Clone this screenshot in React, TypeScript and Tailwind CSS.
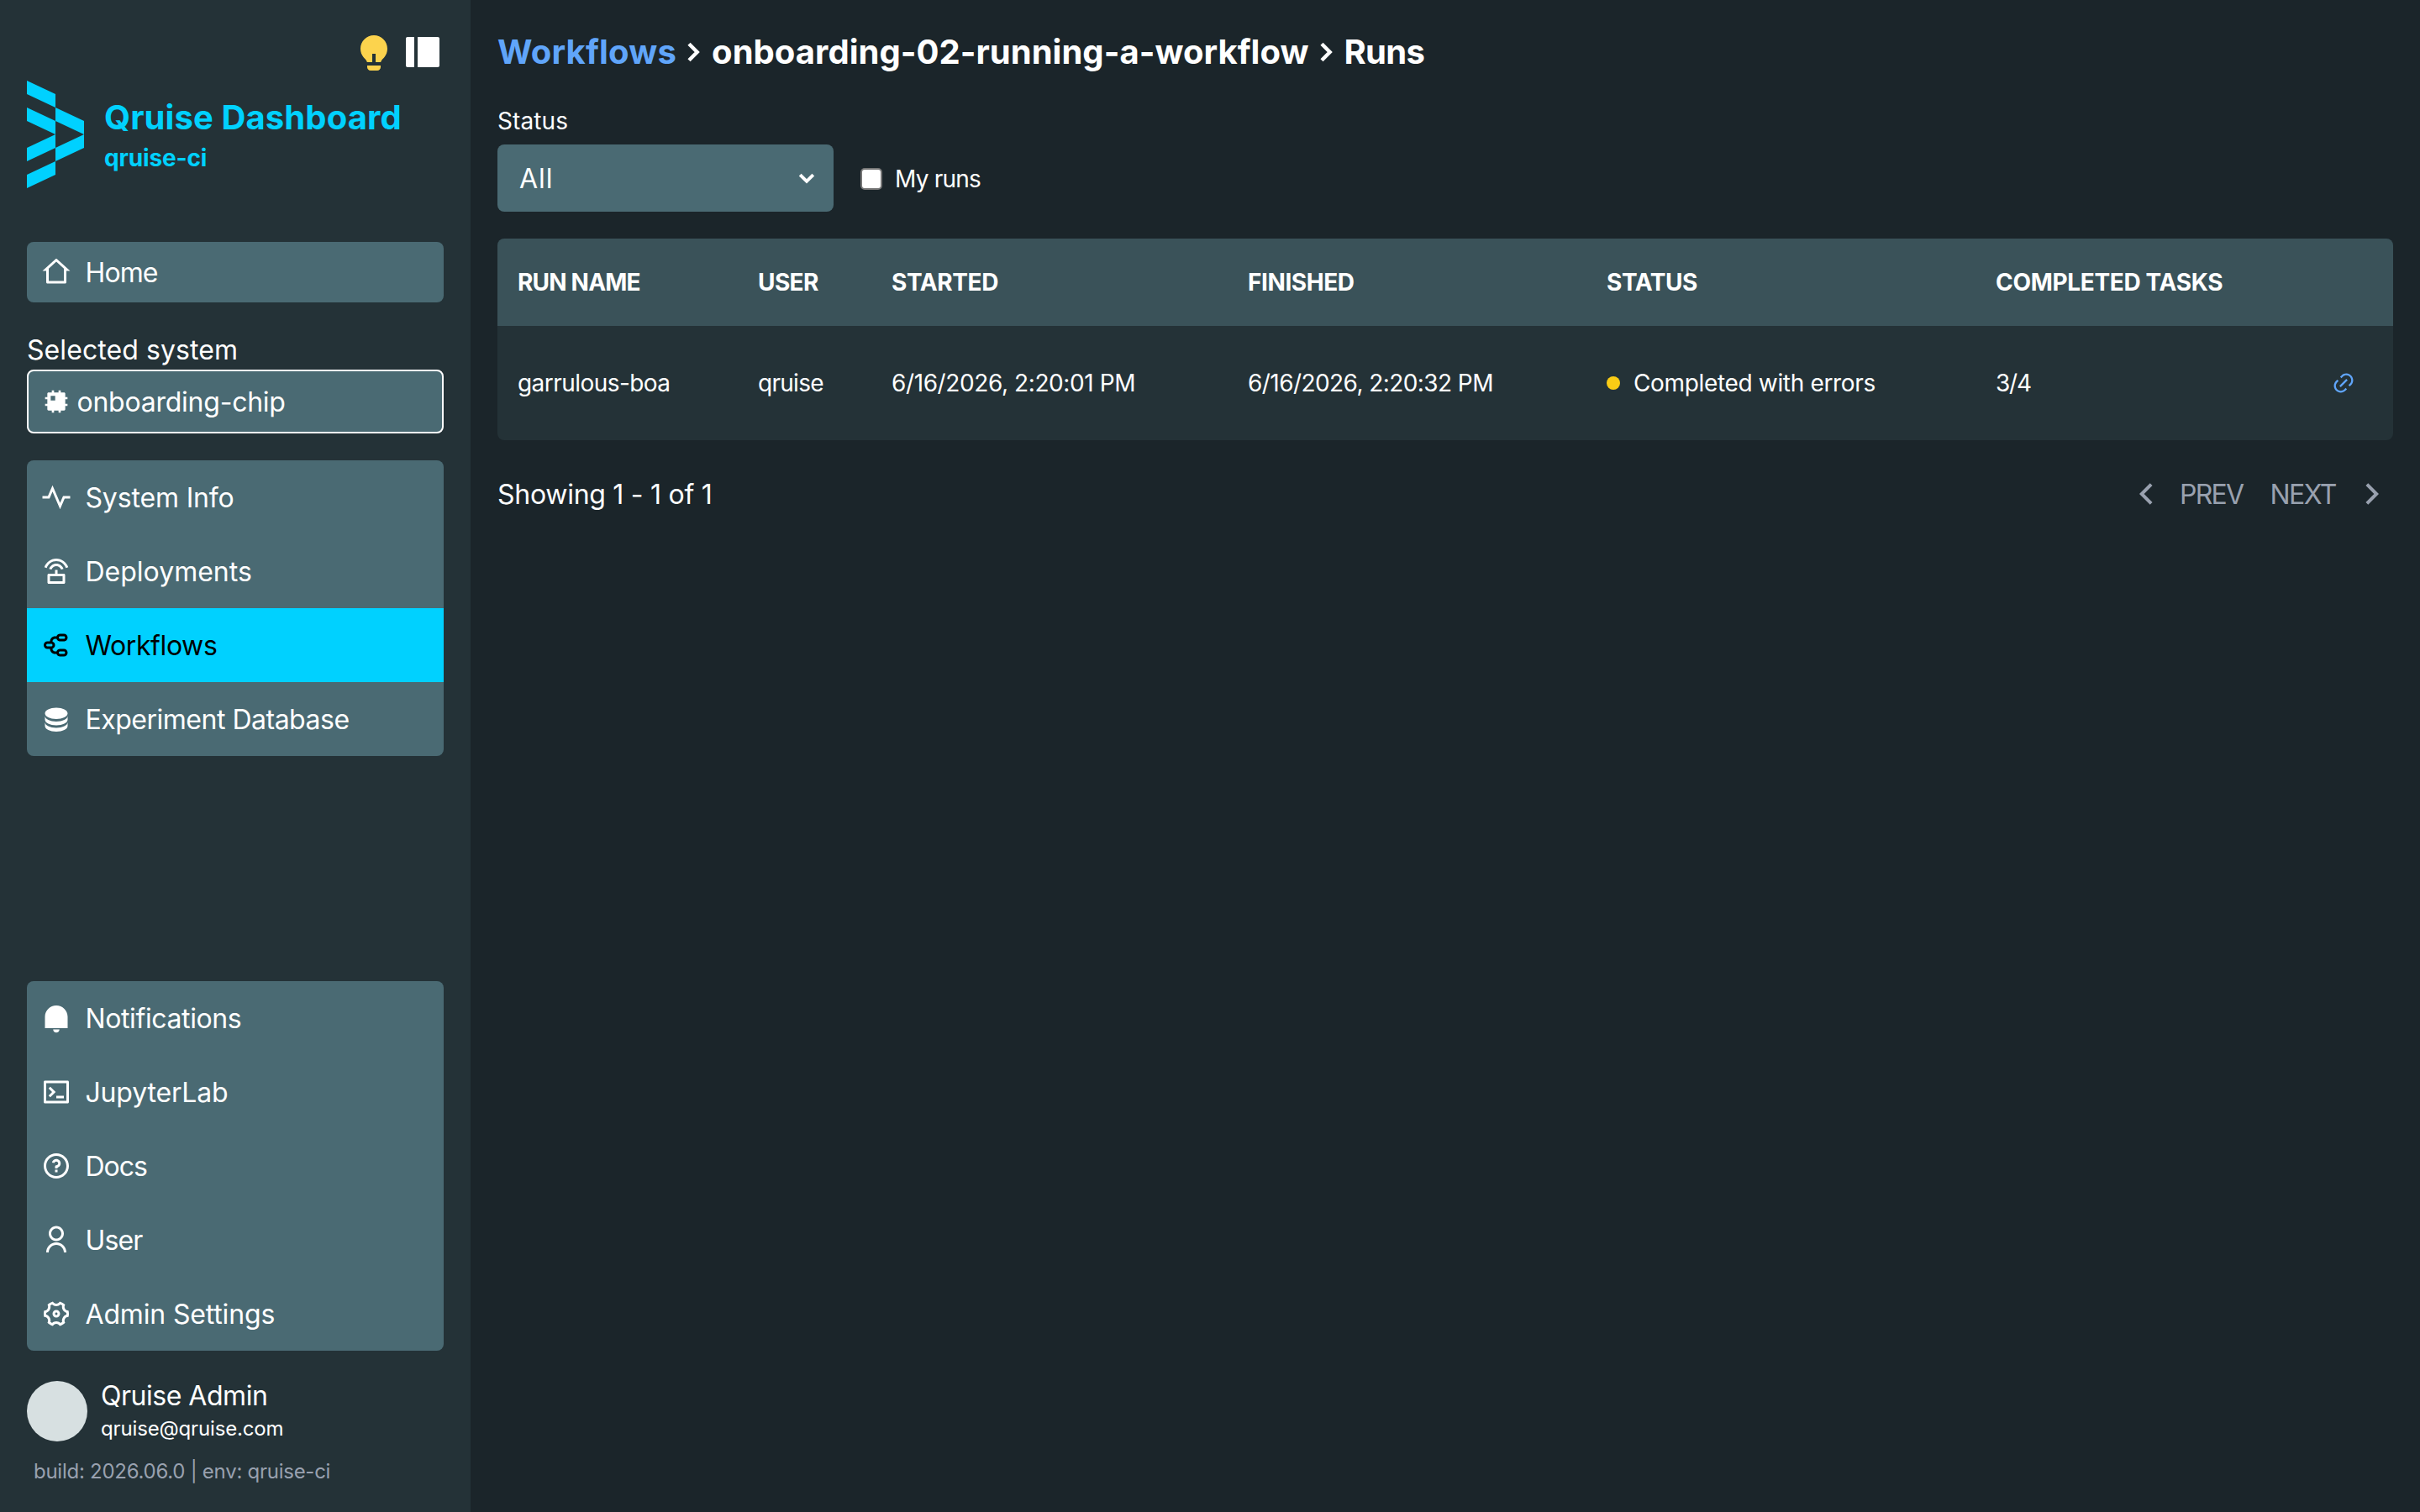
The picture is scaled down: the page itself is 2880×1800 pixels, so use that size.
import { FC } from "react";
import { IconType } from "react-icons";
import {
  RiArrowLeftSLine,
  RiArrowRightSLine,
  RiCpuFill,
  RiDatabase2Fill,
  RiHome2Line,
  RiLayoutLeftFill,
  RiLightbulbFill,
  RiLink,
  RiMindMap,
  RiNotificationFill,
  RiPulseLine,
  RiQuestionLine,
  RiRouterLine,
  RiSettings4Line,
  RiTerminalBoxLine,
  RiUserLine,
} from "react-icons/ri";

interface NavItem {
  label: string;
  icon: IconType;
  tracking: string;
  active?: boolean;
}

const systemItems: NavItem[] = [
  { label: "System Info", icon: RiPulseLine, tracking: "tracking-[-0.16px]" },
  { label: "Deployments", icon: RiRouterLine, tracking: "tracking-normal" },
  {
    label: "Workflows",
    icon: RiMindMap,
    tracking: "tracking-[-0.4px]",
    active: true,
  },
  {
    label: "Experiment Database",
    icon: RiDatabase2Fill,
    tracking: "tracking-[-0.49px]",
  },
];

const generalItems: NavItem[] = [
  {
    label: "Notifications",
    icon: RiNotificationFill,
    tracking: "tracking-[-0.39px]",
  },
  {
    label: "JupyterLab",
    icon: RiTerminalBoxLine,
    tracking: "tracking-[-0.16px]",
  },
  { label: "Docs", icon: RiQuestionLine, tracking: "tracking-[-1px]" },
  { label: "User", icon: RiUserLine, tracking: "tracking-[-0.9px]" },
  {
    label: "Admin Settings",
    icon: RiSettings4Line,
    tracking: "tracking-[-0.16px]",
  },
];

const columns = [
  { label: "Run name", className: "w-[286px] tracking-[-0.81px]" },
  { label: "User", className: "w-[159px] tracking-[-0.61px]" },
  { label: "Started", className: "w-[424px] tracking-[-0.38px]" },
  { label: "Finished", className: "w-[427px] tracking-[-0.42px]" },
  { label: "Status", className: "w-[463px] tracking-[-0.42px]" },
  { label: "Completed tasks", className: "w-[397px] tracking-[-0.33px]" },
];

const runs = [
  {
    name: "garrulous-boa",
    user: "qruise",
    started: "6/16/2026, 2:20:01 PM",
    finished: "6/16/2026, 2:20:32 PM",
    status: "Completed with errors",
    tasks: "3/4",
  },
];

const Logo = () => (
  <svg width="68" height="128" viewBox="0 0 68 128" fill="#00d1ff">
    <path d="M0 0L34 16V32L0 16Z" />
    <path d="M0 32L34 48V64L0 48Z" />
    <path d="M34 32L68 48V64L34 48Z" />
    <path d="M0 80L34 64V80L0 96Z" />
    <path d="M34 80L68 64V80L34 96Z" />
    <path d="M0 112L34 96V112L0 128Z" />
  </svg>
);

const Separator = () => (
  <svg width="16" height="24" viewBox="0 0 16 24" fill="none">
    <path d="M2 2.2L11.7 12L2 21.8" stroke="currentColor" strokeWidth="4.4" />
  </svg>
);

const NavLink: FC<{ item: NavItem }> = ({ item }) => {
  const Icon = item.icon;
  const color = item.active ? "bg-[#00d1ff] text-black" : "text-white";

  return (
    <a className={`flex h-[88px] items-center gap-[16.5px] pl-[17px] ${color}`}>
      <Icon size={36} className="mb-px" />
      <span className={`pt-0.5 ${item.tracking}`}>{item.label}</span>
    </a>
  );
};

const NavGroup: FC<{ items: NavItem[] }> = ({ items }) => (
  <nav className="flex flex-col overflow-hidden rounded-lg bg-[#4a6a73]">
    {items.map((item) => (
      <NavLink key={item.label} item={item} />
    ))}
  </nav>
);

const Sidebar = () => (
  <aside className="flex w-[560px] shrink-0 flex-col bg-[#243237] px-8 pt-[38px] pb-8">
    <div className="flex h-12 justify-end gap-2.5 pr-px">
      <RiLightbulbFill size={48} className="text-[#fcd34d]" />
      <RiLayoutLeftFill size={48} />
    </div>

    <div className="mt-2.5 flex items-center gap-6 text-[#00d1ff]">
      <Logo />
      <div className="pt-[7px] font-bold">
        <h1 className="text-[40px] leading-12 tracking-[0.1px]">
          Qruise Dashboard
        </h1>
        <p className="text-[28px] leading-12 tracking-[-0.16px]">qruise-ci</p>
      </div>
    </div>

    <a className="mt-16 flex h-[72px] items-center gap-[16.5px] rounded-lg bg-[#4a6a73] pl-[17px]">
      <RiHome2Line size={36} className="mb-px" />
      <span className="pt-0.5 tracking-[-0.9px]">Home</span>
    </a>

    <p className="mt-[33px] leading-[47px] tracking-[0.08px]">
      Selected system
    </p>
    <div className="mb-8 flex h-[76px] items-center gap-[8.5px] rounded-lg border-2 border-white bg-[#4a6a73] pl-[17px]">
      <RiCpuFill size={32} />
      <span className="pt-0.5 tracking-[-0.24px]">onboarding-chip</span>
    </div>
    <NavGroup items={systemItems} />

    <div className="mt-auto">
      <NavGroup items={generalItems} />
      <div className="mt-9 flex h-[72px] items-center gap-4">
        <div className="size-[72px] rounded-full bg-[#d7e0e1]" />
        <div>
          <p className="pt-px leading-10 tracking-[-0.48px]">Qruise Admin</p>
          <p className="text-2xl leading-[38px] tracking-[-0.15px]">
            qruise@qruise.com
          </p>
        </div>
      </div>
      <p className="mt-5 pl-2 text-2xl leading-8 tracking-[-0.26px] text-[#99a1af]">
        build: 2026.06.0 | env: qruise-ci
      </p>
    </div>
  </aside>
);

const Breadcrumbs = () => (
  <h2 className="flex h-[60px] items-center gap-[13px] text-[40px] font-bold">
    <a className="tracking-[0.2px] text-[#60a5fa]">Workflows</a>
    <Separator />
    <span className="tracking-[0.03px]">onboarding-02-running-a-workflow</span>
    <Separator />
    <span className="tracking-[-0.7px]">Runs</span>
  </h2>
);

const Filters = () => (
  <div className="mt-8">
    <p className="mb-2 text-[28px] leading-10 tracking-[0.12px]">Status</p>
    <div className="flex items-center gap-8">
      <div className="flex h-20 w-[400px] items-center justify-between rounded-lg bg-[#4a6a73] pr-[22px] pl-[26px]">
        <span className="pt-0.5 tracking-[0.9px]">All</span>
        <svg width="20" height="13" viewBox="0 0 20 13" fill="none">
          <path
            d="M2.2 2.1L10 9.8L17.8 2.1"
            stroke="currentColor"
            strokeWidth="4"
          />
        </svg>
      </div>
      <label className="flex items-center gap-[15px] pt-px text-[28px]">
        <span className="size-[26px] rounded-[5px] border-2 border-[#767676] bg-white" />
        <span className="tracking-[-0.8px]">My runs</span>
      </label>
    </div>
  </div>
);

const RunsTable = () => (
  <div className="mt-8 overflow-hidden rounded-lg">
    <table className="w-full table-fixed text-left text-[28px]">
      <thead className="bg-[#3a5259] uppercase">
        <tr className="h-[104px]">
          {columns.map(({ label, className }) => (
            <th key={label} className={`pl-6 font-bold ${className}`}>
              {label}
            </th>
          ))}
          <th />
        </tr>
      </thead>
      <tbody className="bg-[#243237]">
        {runs.map((run) => (
          <tr key={run.name} className="h-[136px]">
            <td className="pl-6 tracking-[-0.55px]">{run.name}</td>
            <td className="pl-6 tracking-[-0.72px]">{run.user}</td>
            <td className="pl-6 tracking-[-0.4px]">{run.started}</td>
            <td className="pl-6 tracking-[-0.57px]">{run.finished}</td>
            <td className="pl-6 tracking-[-0.34px]">
              <div className="flex items-center gap-4">
                <span className="size-4 rounded-full bg-[#facc15]" />
                {run.status}
              </div>
            </td>
            <td className="pl-6 tracking-[-1.2px]">{run.tasks}</td>
            <td className="pl-[27px]">
              <RiLink size={28} className="text-[#60a5fa]" />
            </td>
          </tr>
        ))}
      </tbody>
    </table>
  </div>
);

const Pagination = () => (
  <div className="mt-8 flex h-16 items-center justify-between">
    <p className="pt-0.5 tracking-[-0.27px]">Showing 1 - 1 of 1</p>
    <div className="flex gap-8 pr-px text-[#99a1af]">
      <button className="flex items-center gap-4">
        <RiArrowLeftSLine size={48} className="mb-px" />
        <span className="pt-0.5 tracking-[-1.7px]">PREV</span>
      </button>
      <button className="flex items-center gap-[19px]">
        <span className="pt-0.5 tracking-[-1.5px]">NEXT</span>
        <RiArrowRightSLine size={48} className="mb-px" />
      </button>
    </div>
  </div>
);

const App = () => (
  <div className="flex h-[1800px] w-[2880px] bg-[#1b252a] font-[Inter,sans-serif] text-[32px] text-white">
    <Sidebar />
    <main className="flex-1 p-8">
      <Breadcrumbs />
      <Filters />
      <RunsTable />
      <Pagination />
    </main>
  </div>
);

export default App;
